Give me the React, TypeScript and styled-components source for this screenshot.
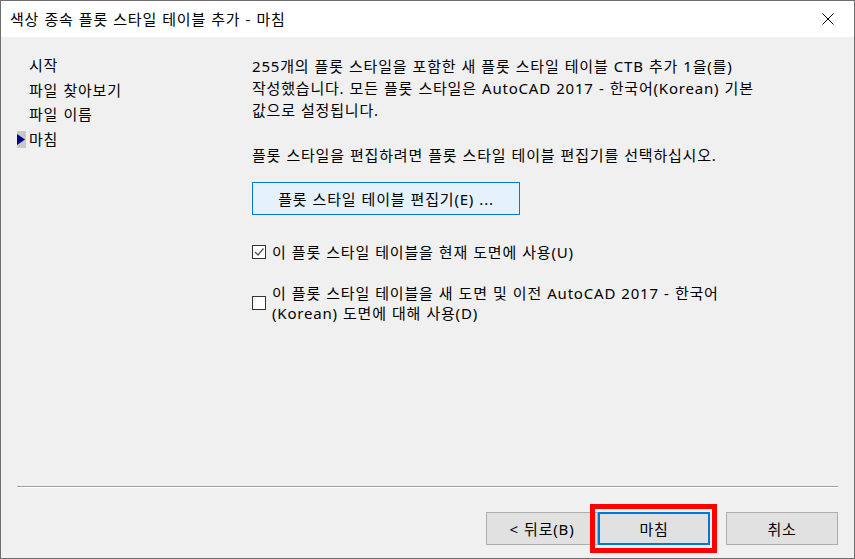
import React from 'react'
import styled, { createGlobalStyle } from 'styled-components'

const GlobalStyle = createGlobalStyle`
  html, body {
    margin: 0;
    padding: 0;
    background: #f0f0f0;
  }
  body {
    font-family: "Noto Sans", "Noto Sans CJK KR", sans-serif;
    font-size: 15px;
    letter-spacing: 0.8px;
    word-spacing: 0.5px;
    color: #000;
  }
`

const Window = styled.div`
  width: 855px;
  height: 559px;
  box-sizing: border-box;
  border: 1px solid #6e6e6e;
  display: flex;
  flex-direction: column;
  background: #f0f0f0;
`
const TitleBar = styled.div`
  height: 36px;
  flex: none;
  background: #fff;
  display: flex;
  align-items: center;
  justify-content: space-between;
  padding-left: 9px;
`
const Title = styled.div`
  font-size: 15px;
  line-height: 20px;
  white-space: nowrap;
`
const CloseButton = styled.div`
  width: 46px;
  height: 36px;
  margin-right: 3px;
  display: flex;
  align-items: center;
  justify-content: center;
`
const Body = styled.div`
  flex: 1;
  display: flex;
  flex-direction: column;
`
const Main = styled.div`
  flex: 1;
  display: flex;
`
const Nav = styled.div`
  width: 251px;
  flex: none;
  box-sizing: border-box;
  padding: 16px 0 0 16px;
`
const NavItem = styled.div`
  height: 24.6px;
  line-height: 24.6px;
  display: flex;
  align-items: center;
  white-space: nowrap;
`
const MarkerSlot = styled.div`
  width: 12px;
  height: 17px;
  flex: none;
`
const ActiveMarker = styled.div`
  width: 9px;
  height: 17px;
  background: #c8c8c8;
  display: flex;
  align-items: center;
  justify-content: flex-start;
`
const Content = styled.div`
  flex: 1;
  padding-top: 18px;
  display: flex;
  flex-direction: column;
  align-items: flex-start;
`
const Para = styled.p<{ $gap?: number }>`
  margin: ${p => p.$gap ?? 0}px 0 0 0;
  line-height: 22px;
  white-space: nowrap;
`
const EditorButton = styled.div`
  margin-top: 16px;
  width: 268px;
  height: 33px;
  box-sizing: border-box;
  background: #e5f1fb;
  border: 1px solid #0078d7;
  display: flex;
  align-items: center;
  justify-content: center;
  line-height: 20px;
`
const CheckRow = styled.div<{ $gap: number }>`
  margin-top: ${p => p.$gap}px;
  display: flex;
  align-items: center;
  gap: 6px;
`
const Box = styled.div`
  width: 14px;
  height: 14px;
  flex: none;
  box-sizing: border-box;
  border: 1px solid #333;
  background: #fff;
  display: flex;
  align-items: center;
  justify-content: center;
`
const CheckLabel = styled.div`
  line-height: 20px;
  white-space: nowrap;
`
const Footer = styled.div`
  height: 72px;
  flex: none;
  display: flex;
  flex-direction: column;
`
const Separator = styled.div`
  margin: 0 16px 0 16px;
  border-top: 1px solid #a0a0a0;
  border-bottom: 1px solid #fff;
`
const ButtonRow = styled.div`
  display: flex;
  justify-content: flex-end;
  padding: 24px 16px 0 0;
`
const DialogButton = styled.div<{ $primary?: boolean; $gapLeft?: number }>`
  position: relative;
  width: 112px;
  height: 33px;
  margin-left: ${p => p.$gapLeft ?? 0}px;
  box-sizing: border-box;
  background: #e1e1e1;
  border: ${p => (p.$primary ? '2px solid #0078d7' : '1px solid #adadad')};
  display: flex;
  align-items: center;
  justify-content: center;
  line-height: 20px;
`
const Highlight = styled.div`
  position: absolute;
  top: -10px;
  left: -10px;
  right: -9px;
  bottom: -10px;
  border: 5px solid #ff0000;
  pointer-events: none;
`

const navItems = ['시작', '파일 찾아보기', '파일 이름', '마침']

export default function App() {
  return (
    <>
      <GlobalStyle />
      <Window>
        <TitleBar>
          <Title>색상 종속 플롯 스타일 테이블 추가 - 마침</Title>
          <CloseButton>
            <svg width="12" height="12" viewBox="0 0 12 12">
              <path d="M0.5 0.5 L11.5 11.5 M11.5 0.5 L0.5 11.5" stroke="#000" strokeWidth="1" />
            </svg>
          </CloseButton>
        </TitleBar>
        <Body>
          <Main>
            <Nav>
              {navItems.map((item, i) => (
                <NavItem key={item}>
                  <MarkerSlot>
                    {i === navItems.length - 1 && (
                      <ActiveMarker>
                        <svg width="8" height="11" viewBox="0 0 8 11">
                          <path d="M0 0 L8 5.5 L0 11 Z" fill="#000080" />
                        </svg>
                      </ActiveMarker>
                    )}
                  </MarkerSlot>
                  {item}
                </NavItem>
              ))}
            </Nav>
            <Content>
              <Para>
                255개의 플롯 스타일을 포함한 새 플롯 스타일 테이블 CTB 추가 1을(를)
                <br />
                작성했습니다. 모든 플롯 스타일은 AutoCAD 2017 - 한국어(Korean) 기본
                <br />
                값으로 설정됩니다.
              </Para>
              <Para $gap={23}>플롯 스타일을 편집하려면 플롯 스타일 테이블 편집기를 선택하십시오.</Para>
              <EditorButton>플롯 스타일 테이블 편집기(E) ...</EditorButton>
              <CheckRow $gap={27}>
                <Box>
                  <svg width="12" height="12" viewBox="0 0 12 12">
                    <path d="M2 6 L5 9 L10.5 2.5" stroke="#555" strokeWidth="1.3" fill="none" />
                  </svg>
                </Box>
                <CheckLabel>이 플롯 스타일 테이블을 현재 도면에 사용(U)</CheckLabel>
              </CheckRow>
              <CheckRow $gap={21}>
                <Box />
                <CheckLabel>
                  이 플롯 스타일 테이블을 새 도면 및 이전 AutoCAD 2017 - 한국어
                  <br />
                  (Korean) 도면에 대해 사용(D)
                </CheckLabel>
              </CheckRow>
            </Content>
          </Main>
          <Footer>
            <Separator />
            <ButtonRow>
              <DialogButton>&lt; 뒤로(B)</DialogButton>
              <DialogButton $primary>
                마침
                <Highlight />
              </DialogButton>
              <DialogButton $gapLeft={16}>취소</DialogButton>
            </ButtonRow>
          </Footer>
        </Body>
      </Window>
    </>
  )
}
